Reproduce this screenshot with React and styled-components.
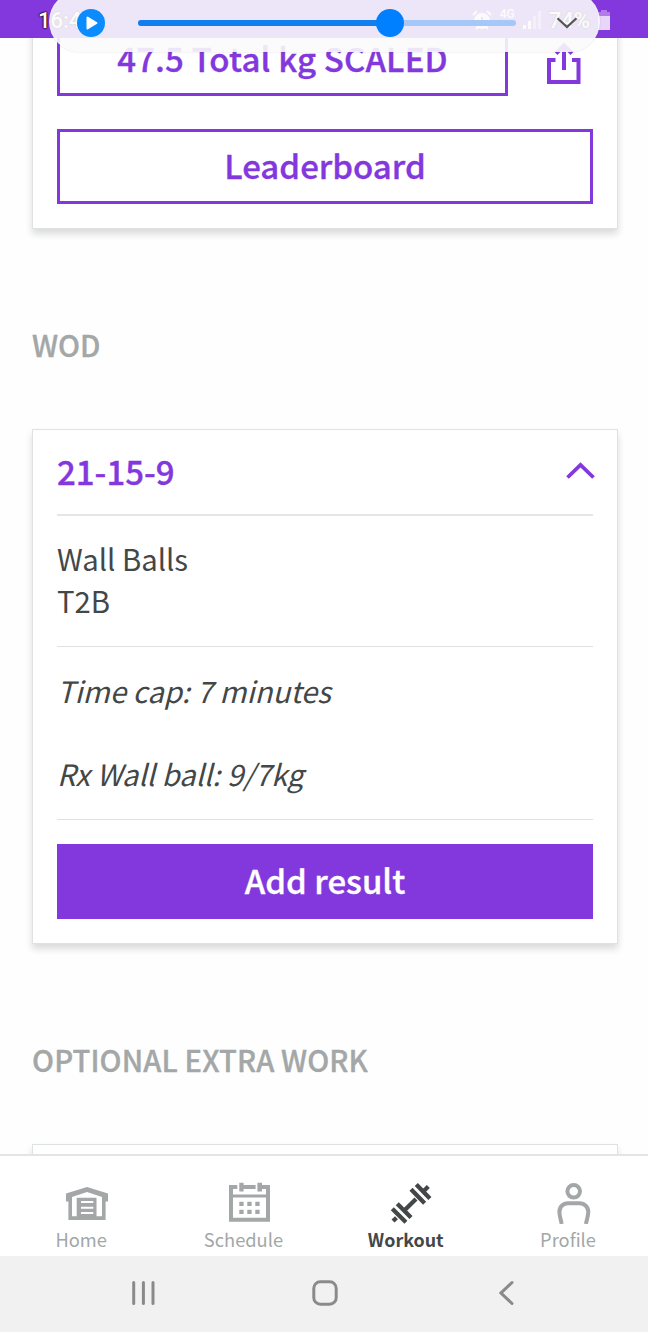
import styled, { createGlobalStyle } from 'styled-components'

const PURPLE = '#8338dd'
const GREY = '#a3a7a7'
const DARK = '#434747'
const LINE = '#dfe2e2'

const GlobalStyle = createGlobalStyle`
* {
    box-sizing: border-box;
}
body {
    margin: 0;
    background: #fff;
    font-family: 'Noto Sans CJK SC', sans-serif;
    color: ${DARK};
}
svg {
    display: block;
    flex: none;
}
`

const Screen = styled.div`
width: 648px;
height: 1332px;
position: relative;
display: flex;
flex-direction: column;
overflow: hidden;
background: #fefefe;
`

// Android status bar
const StatusBar = styled.header`
height: 38px;
flex: none;
display: flex;
align-items: center;
padding: 2px 38px 0 38px;
background: ${PURPLE};
color: #fff;
font-family: Roboto, sans-serif;
font-size: 22px;
font-weight: 500;
text-shadow: 0 0 2px #000, 0 0 2px #000, 0 0 1px #000;
`
const Clock = styled.span`
flex: 1;
`
const StatusIcons = styled.div`
display: flex;
align-items: center;
gap: 8px;
`
const Network = styled.span`
font-size: 12px;
align-self: flex-start;
margin-top: -1px;
text-shadow: none;
`

// Floating recorder bar which lies over the app
const PlayerPill = styled.div`
position: absolute;
top: -9px;
left: 49px;
width: 551px;
height: 61px;
padding: 3px 22px 0 28px;
display: flex;
align-items: center;
border-radius: 31px;
background: rgba(250, 250, 250, 0.89);
box-shadow: 0 0 2px rgba(0, 0, 0, 0.16);
`
const PlayButton = styled.div`
width: 28px;
height: 28px;
display: flex;
align-items: center;
justify-content: center;
padding-left: 2px;
border-radius: 50%;
background: #0a8cff;
`
const Track = styled.div`
width: 378px;
height: 6px;
margin-left: 33px;
margin-right: 40px;
border-radius: 3px;
background: #a6c8f8;
`
const Played = styled.div`
width: 252px;
height: 6px;
position: relative;
border-radius: 3px;
background: #127ff0;
`
const Knob = styled.div`
position: absolute;
top: -11px;
right: -14px;
width: 28px;
height: 28px;
border-radius: 50%;
background: #0080ff;
`

const Content = styled.main`
flex: 1;
min-height: 0;
overflow: hidden;
padding: 0 30px 0 32px;
`
const Card = styled.section`
padding: ${({ $flush }) => ($flush ? '0 24px 24px' : '24px')};
margin-top: ${({ $scrolled }) => ($scrolled ? '-42px' : '0')};
border: 1px solid ${LINE};
background: #fff;
box-shadow: 0 5px 7px rgba(0, 0, 0, 0.14);
`
const SectionTitle = styled.h2`
height: 200px;
margin: 0;
padding-top: 14px;
line-height: 203px;
font-size: 29.2px;
font-weight: 500;
-webkit-text-stroke: 0.35px;
letter-spacing: ${({ $spacing }) => $spacing || '0'};
color: ${GREY};
`
const ResultRow = styled.div`
display: flex;
align-items: flex-end;
justify-content: space-between;
margin-bottom: 33px;
padding-right: 12px;
`
const Button = styled.button`
display: block;
width: ${({ $width }) => $width || '100%'};
height: 75px;
padding: 0 0 ${({ $low }) => ($low ? '0' : '2px')};
border: 3px solid ${PURPLE};
background: ${({ $filled }) => ($filled ? PURPLE : '#fff')};
color: ${({ $filled }) => ($filled ? '#fff' : PURPLE)};
font-family: inherit;
font-size: 33px;
font-weight: 500;
-webkit-text-stroke: 0.35px;
line-height: 67px;
letter-spacing: ${({ $spacing }) => $spacing || '0'};
`
const ShareBox = styled.div`
padding-bottom: 12px;
`
const CardHeader = styled.div`
height: 84px;
display: flex;
align-items: center;
justify-content: space-between;
margin-right: -2px;
padding-bottom: 2px;
`
const CardTitle = styled.h3`
margin: 0;
font-size: 33px;
line-height: 40px;
font-weight: 500;
-webkit-text-stroke: 0.35px;
color: ${PURPLE};
`
const Exercise = styled.div`
padding: ${({ $top }) => $top} 0 ${({ $bottom }) => $bottom};
border-top: ${({ $thick }) => ($thick ? '2px' : '1px')} solid ${({ $thick }) => ($thick ? '#e4e7e7' : LINE)};
font-size: 29.3px;
line-height: 41.5px;
font-style: ${({ $italic }) => ($italic ? 'italic' : 'normal')};
white-space: pre-line;
`
const Action = styled.div`
padding-top: 24px;
border-top: 1px solid ${LINE};
`

const TabBar = styled.nav`
height: 102px;
flex: none;
display: grid;
grid-template-columns: repeat(4, 162.3px);
border-top: 2px solid #e2e5e5;
background: #fff;
`
const Tab = styled.div`
display: flex;
flex-direction: column;
align-items: center;
padding-top: 26px;
color: ${({ $active }) => ($active ? DARK : GREY)};
font-size: ${({ $active }) => ($active ? '17.9px' : '18.3px')};
font-weight: ${({ $active }) => ($active ? 700 : 400)};
line-height: 26px;
`
const TabIcon = styled.div`
height: 44px;
margin-left: 12px;
`

const SystemBar = styled.footer`
height: 76px;
flex: none;
display: grid;
grid-template-columns: repeat(3, 181.5px);
justify-content: center;
justify-items: center;
align-items: center;
padding: 0 0 2px 2px;
background: #f1f1f1;
`

const AlarmIcon = () => (
    <svg width="20" height="20" viewBox="0 0 20 20" fill="none" stroke="#fff" strokeWidth="2">
        <circle cx="10" cy="11" r="7" fill="#fff" />
        <path d="M1 5l4-4M19 5l-4-4M4 19l2-2M16 19l-2-2" />
        <path d="M10 7v5h3" stroke="#8338dd" />
    </svg>
)
const SignalIcon = () => (
    <svg width="18" height="18" viewBox="0 0 18 18" fill="#fff">
        <path d="M0 14h3v4H0zM5 10h3v8H5z" />
        <path d="M10 5h3v13h-3zM15 0h3v18h-3z" opacity="0.45" />
    </svg>
)
const BatteryIcon = () => (
    <svg width="12" height="20" viewBox="0 0 12 20">
        <path d="M3 0h6v2h3v5H0V2h3z" fill="#b27be9" />
        <path d="M0 6h12v14H0z" fill="#e8d6fa" />
    </svg>
)
const PlayIcon = () => (
    <svg width="12" height="14" viewBox="0 0 12 14">
        <path d="M1.500 1.500v11L10.500 7z" fill="#fff" stroke="#fff" strokeWidth="2" strokeLinejoin="round" />
    </svg>
)
const ArrowDown = () => (
    <svg width="22" height="12" viewBox="0 0 22 12" fill="none" stroke="#555" strokeWidth="2.2">
        <path d="M1.500 1.200L11 10l9.500-8.800" />
    </svg>
)
const ShareIcon = () => (
    <svg width="34" height="41" viewBox="0 0 34 41" fill="none" stroke={PURPLE} strokeWidth="4">
        <path d="M8.500 17H2v22h29.500V17H25" />
        <path d="M17 27V3M9 10.500l8-8 8 8" />
    </svg>
)
const ChevronUp = () => (
    <svg width="30" height="18" viewBox="0 0 30 18" fill="none" stroke={PURPLE} strokeWidth="3.8">
        <path d="M2.500 15.500L15.500 3l13 12.500" />
    </svg>
)
const HomeIcon = () => (
    <svg width="42" height="42" viewBox="0 -5 42 42" fill="currentColor">
        <path
            fillRule="evenodd"
            d="M21 0L42 6.500v8h-2.400V33H2.400V14.500H0v-8zM21 5L6 10v19.300h4.700V10.700h19.800v18.600H36V10zM15 14v2h12.300v-2zM15 19.700v2h12.300v-2zM15 25v2h12.300v-2z"
        />
    </svg>
)
const CalendarIcon = () => (
    <svg width="41" height="42" viewBox="0 -0.700 41 42" fill="currentColor">
        <path d="M0 2.300h8.300v4H4V11.700h33V6.300h-4v2.400h-4.600V0H33v2.300h8V39H0zM4 14.700V35h33V14.700z" fillRule="evenodd" />
        <path d="M10.300 0h4.300v2.300h12v4h-12v2.400h-4.300z" />
        <path d="M10.300 19h4.300v4.200h-4.300zM18.300 19h4.300v4.200h-4.300zM26.300 19h4.300v4.200h-4.300zM10.300 27h4.300v4.200h-4.300zM18.300 27h4.300v4.200h-4.300zM26.300 27h4.300v4.200h-4.300z" />
    </svg>
)
const DumbbellIcon = () => (
    <svg width="41" height="42" viewBox="0 -1.500 41 42" fill="none" stroke="currentColor" strokeWidth="4.300">
        <path d="M20 5.700l13.600 14M25.300 1l13.600 14M31.500 8.700L37.300 3" />
        <path d="M6.300 20.300L20 34M1.300 25.300l13.600 13.400M13 27.300l12-11.800M2 37.500l3.500-3.300" />
    </svg>
)
const PersonIcon = () => (
    <svg width="34" height="42" viewBox="0 0 34 42" fill="none" stroke="currentColor" strokeWidth="4">
        <circle cx="16.700" cy="9.300" r="6.300" />
        <path d="M4.700 42C3.500 36 2.400 33.500 2.400 30c0-5 3.600-8.700 8.600-8.700h11.500c5 0 8.800 3.700 8.800 8.700 0 3.500-1.200 6-2.400 12" />
    </svg>
)
const RecentsIcon = () => (
    <svg width="25" height="26" viewBox="0 0 25 26" stroke="#8a8a8a" strokeWidth="3" strokeLinecap="round">
        <path d="M2.700 2.500v21M12.400 2.500v21M22 2.500v21" />
    </svg>
)
const HomeKeyIcon = () => (
    <svg width="26" height="26" viewBox="0 0 26 26" fill="none" stroke="#8a8a8a" strokeWidth="3">
        <rect x="1.800" y="1.800" width="22.400" height="22.400" rx="6.500" />
    </svg>
)
const BackIcon = () => (
    <svg width="15" height="26" viewBox="0 0 15 26" fill="none" stroke="#8a8a8a" strokeWidth="3" strokeLinecap="round">
        <path d="M13 2.500L2 13l11 10.500" />
    </svg>
)

const tabs = [
    { label: 'Home', Icon: HomeIcon },
    { label: 'Schedule', Icon: CalendarIcon },
    { label: 'Workout', Icon: DumbbellIcon, active: true },
    { label: 'Profile', Icon: PersonIcon },
]

const Player = () => (
    <PlayerPill>
        <PlayButton><PlayIcon /></PlayButton>
        <Track>
            <Played><Knob /></Played>
        </Track>
        <ArrowDown />
    </PlayerPill>
)

const App = () => (
    <Screen>
        <GlobalStyle />
        <StatusBar>
            <Clock>16:42</Clock>
            <StatusIcons>
                <AlarmIcon />
                <Network>4G</Network>
                <SignalIcon />
                <span>74%</span>
                <BatteryIcon />
            </StatusIcons>
        </StatusBar>
        <Content>
            <Card $scrolled>
                <ResultRow>
                    <Button $low $width="451px" $spacing="0.15px">47.5 Total kg SCALED</Button>
                    <ShareBox><ShareIcon /></ShareBox>
                </ResultRow>
                <Button>Leaderboard</Button>
            </Card>
            <SectionTitle>WOD</SectionTitle>
            <Card $flush>
                <CardHeader>
                    <CardTitle>21-15-9</CardTitle>
                    <ChevronUp />
                </CardHeader>
                <Exercise $thick $top="22px" $bottom="25px">{'Wall Balls\nT2B'}</Exercise>
                <Exercise $italic $top="22.5px" $bottom="25px">{'Time cap: 7 minutes\n\nRx Wall ball: 9/7kg'}</Exercise>
                <Action>
                    <Button $filled>Add result</Button>
                </Action>
            </Card>
            <SectionTitle $spacing="0.12px">OPTIONAL EXTRA WORK</SectionTitle>
            <Card />
        </Content>
        <TabBar>
            {tabs.map(({ label, Icon, active }) => (
                <Tab key={label} $active={active}>
                    <TabIcon><Icon /></TabIcon>
                    {label}
                </Tab>
            ))}
        </TabBar>
        <SystemBar>
            <RecentsIcon />
            <HomeKeyIcon />
            <BackIcon />
        </SystemBar>
        <Player />
    </Screen>
)

export default App
